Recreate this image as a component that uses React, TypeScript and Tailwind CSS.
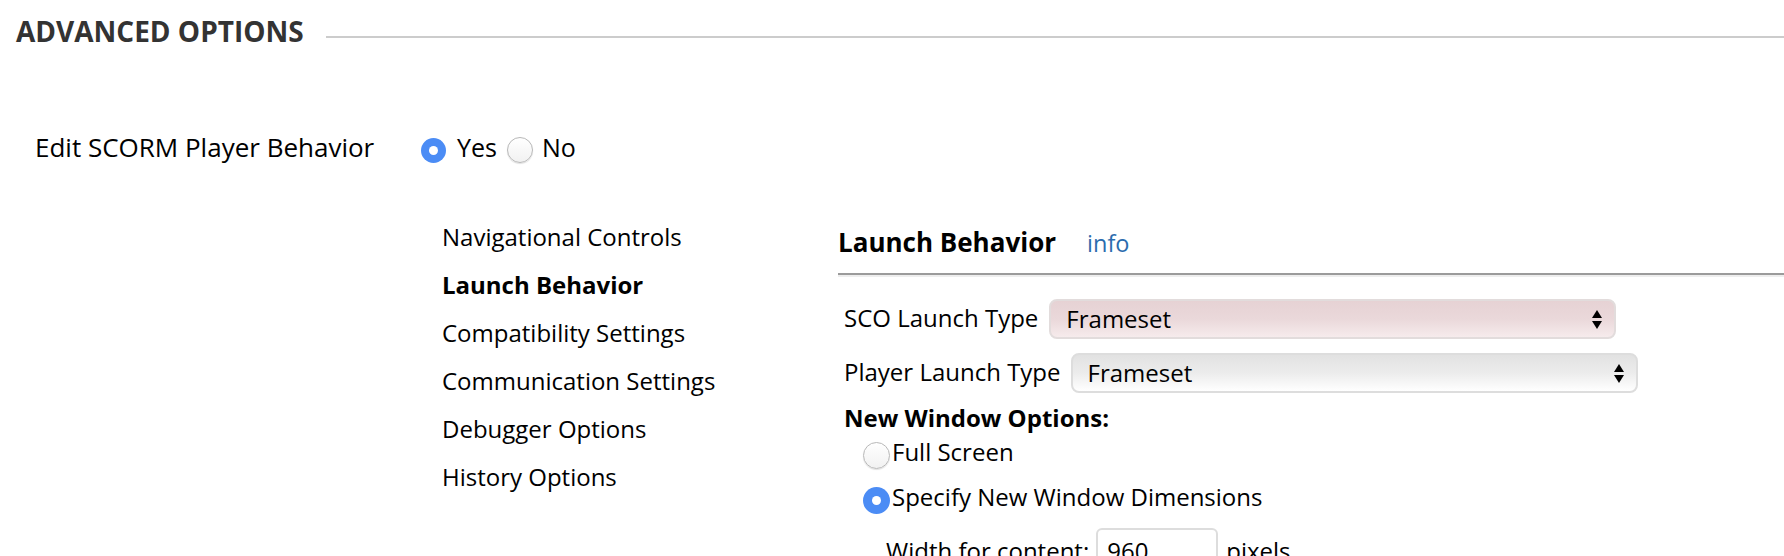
import React from "react";

function RadioOn({ size = 26 }: { size?: number }) {
  return (
    <span
      className="flex shrink-0 items-center justify-center rounded-full bg-[#4b8cf5]"
      style={{ width: size, height: size }}
    >
      <span className="h-[9px] w-[9px] rounded-full bg-white" />
    </span>
  );
}

function RadioOff({ size = 26 }: { size?: number }) {
  return (
    <span
      className="block shrink-0 rounded-full border border-[#b8b8b8] bg-gradient-to-b from-[#ffffff] to-[#f1f1f1] shadow-[0_1px_1px_rgba(0,0,0,0.12)]"
      style={{ width: size, height: size }}
    />
  );
}

function Arrows() {
  return (
    <svg width="10" height="19" viewBox="0 0 10 19" className="shrink-0">
      <polygon points="0,8 5,0 10,8" fill="#000" />
      <polygon points="0,11 10,11 5,19" fill="#000" />
    </svg>
  );
}

function Select({ pink }: { pink?: boolean }) {
  return (
    <div
      className={
        "flex h-[40px] w-[567px] items-center justify-between rounded-[8px] border-2 pl-[15px] pr-[12px] " +
        (pink
          ? "border-[#e2dcdc] bg-gradient-to-b from-[#e6d2d4] via-[#ead8da] to-[#f6ebec]"
          : "border-[#dddddd] bg-gradient-to-b from-[#e2e2e2] via-[#ececec] to-[#ffffff]")
      }
    >
      <span className="text-[24px] leading-[32px] text-black">Frameset</span>
      <Arrows />
    </div>
  );
}

export default function App() {
  return (
    <div className="h-[556px] w-[1784px] overflow-hidden bg-white font-['Open_Sans','Noto_Sans',sans-serif] text-black">
      {/* Section heading */}
      <div className="flex items-start pl-[16px] pt-[11px]">
        <h2 className="text-[28px] font-bold leading-[40px] text-[#333333]">ADVANCED OPTIONS</h2>
        <div className="ml-[22px] mt-[25px] h-[2px] flex-1 bg-[#cccccc]" />
      </div>

      {/* Edit SCORM row */}
      <div className="mt-[78px] flex items-start pl-[35px]">
        <div className="w-[386px] text-[26px] leading-[36px]">Edit SCORM Player Behavior</div>
        <div className="flex h-[36px] items-center">
          <span className="mt-[6px]">
            <RadioOn size={25} />
          </span>
          <span className="ml-[11px] text-[25px] leading-[36px]">Yes</span>
          <span className="ml-[10px] mt-[6px]">
            <RadioOff size={26} />
          </span>
          <span className="ml-[9px] text-[25px] leading-[36px]">No</span>
        </div>
      </div>

      {/* Nav + panel */}
      <div className="mt-[48px] flex pl-[442px]">
        <nav className="flex w-[396px] flex-col text-[24px] leading-[48px]">
          <span>Navigational Controls</span>
          <span className="font-bold">Launch Behavior</span>
          <span>Compatibility Settings</span>
          <span>Communication Settings</span>
          <span>Debugger Options</span>
          <span>History Options</span>
        </nav>

        <div className="mt-[11px] flex-1">
          <div className="flex items-baseline">
            <h3 className="text-[26px] font-bold leading-[36px]">Launch Behavior</h3>
            <span className="ml-[31px] text-[23.5px] leading-[36px] text-[#2b6cae]">info</span>
          </div>
          <div className="mt-[12px] h-[2px] bg-[#9b9b9b]" />
          <div className="h-[2px] bg-[#eeeeee]" />

          <div className="pl-[6px]">
            <div className="mt-[22px] flex h-[40px] items-center">
              <span className="mb-[3px] text-[24px] leading-[32px]">SCO Launch Type</span>
              <div className="ml-[11px]">
                <Select pink />
              </div>
            </div>
            <div className="mt-[14px] flex h-[40px] items-center">
              <span className="mb-[3px] text-[24px] leading-[32px]">Player Launch Type</span>
              <div className="ml-[10px]">
                <Select />
              </div>
            </div>

            <div className="mt-[10px] text-[24px] font-bold leading-[30px]">New Window Options:</div>

            <div className="flex h-[45px] items-center pl-[19px]">
              <RadioOff size={27} />
              <span className="mb-[8px] ml-[2px] text-[24px] leading-[32px]">Full Screen</span>
            </div>
            <div className="flex h-[45px] items-center pl-[19px]">
              <RadioOn size={27} />
              <span className="mb-[7px] ml-[2px] text-[24px] leading-[32px]">Specify New Window Dimensions</span>
            </div>

            <div className="mt-[5px] flex items-start pl-[42px]">
              <span className="mt-[7px] text-[24px] leading-[32px]">Width for content:</span>
              <div className="ml-[7px] h-[44px] w-[122px] rounded-[6px] border-2 border-[#dddddd] pl-[9px] pt-[5px] text-[24px] leading-[32px]">
                960
              </div>
              <span className="ml-[8px] mt-[7px] text-[24px] leading-[32px]">pixels</span>
            </div>
          </div>
        </div>
      </div>
    </div>
  );
}
